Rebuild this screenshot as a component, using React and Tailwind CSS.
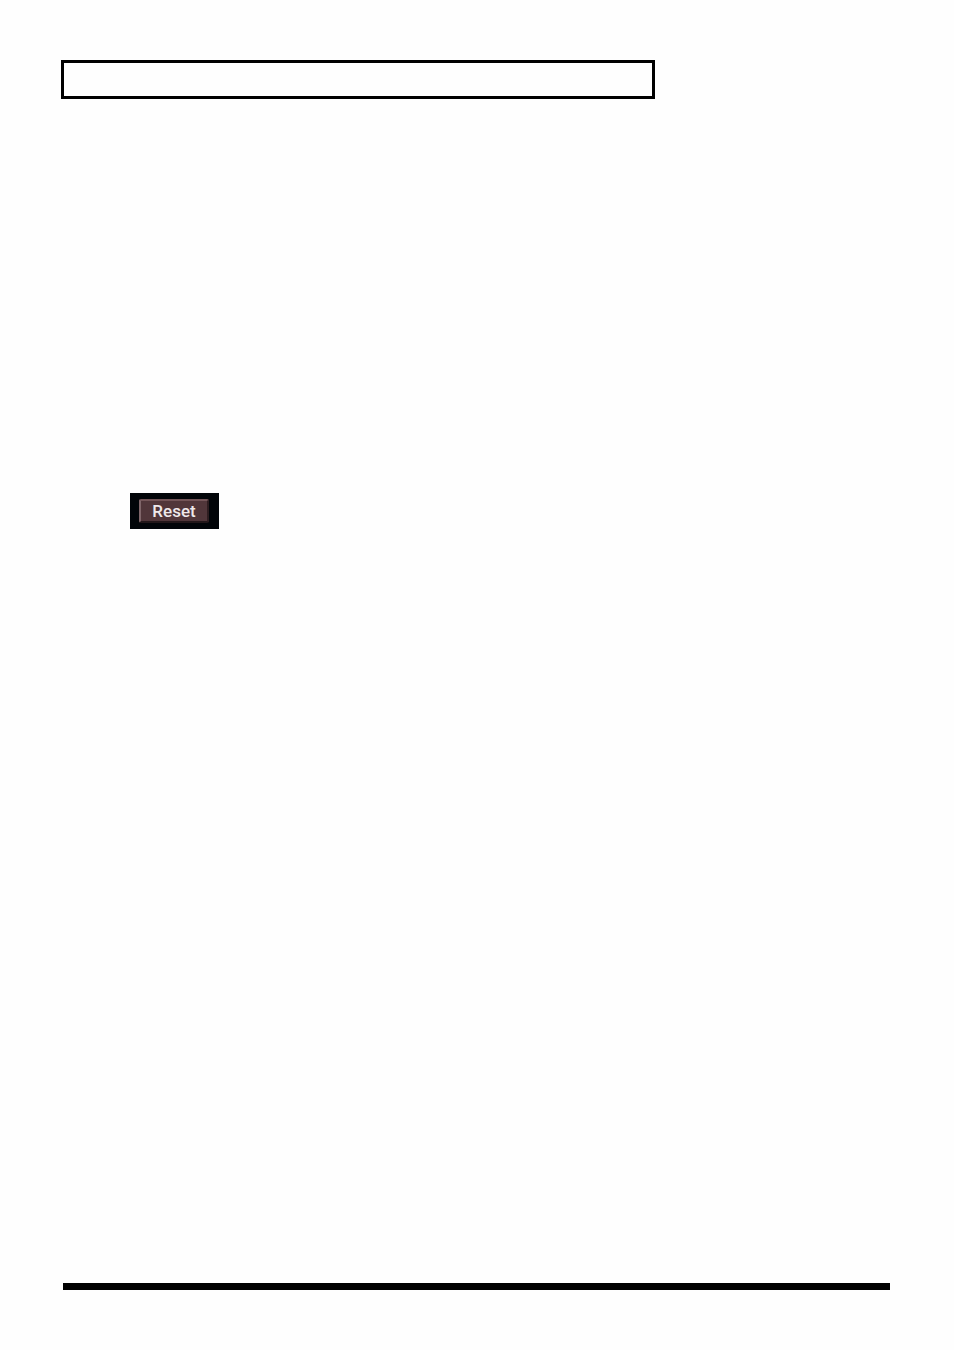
import React from "react";

export default function App() {
  return (
    <div className="flex min-h-screen flex-col bg-[#fefefe] pt-[60px] pb-[60px] font-['Roboto','Liberation_Sans',sans-serif]">
      {/* Title frame */}
      <header className="pr-16 pl-[61px]">
        <div className="h-[39px] w-full max-w-[594px] border-3 border-black" />
      </header>

      {/* Content */}
      <main className="grow px-[130px] pt-[394px]">
        <div className="h-9 w-[89px] bg-[#020509] px-[9px] pt-[6px]">
          <button
            type="button"
            className="flex h-[24px] w-[70px] items-center justify-center rounded-[2px] border-2 border-t-[#745558] border-r-[#2e1d20] border-b-[#23171a] border-l-[#80666a] bg-[#51363a] text-[17px] leading-5 font-medium text-[#eee8ea]"
          >
            Reset
          </button>
        </div>
      </main>

      {/* Bottom rule */}
      <footer className="pr-16 pl-[63px]">
        <div className="h-[7px] bg-black" />
      </footer>
    </div>
  );
}
